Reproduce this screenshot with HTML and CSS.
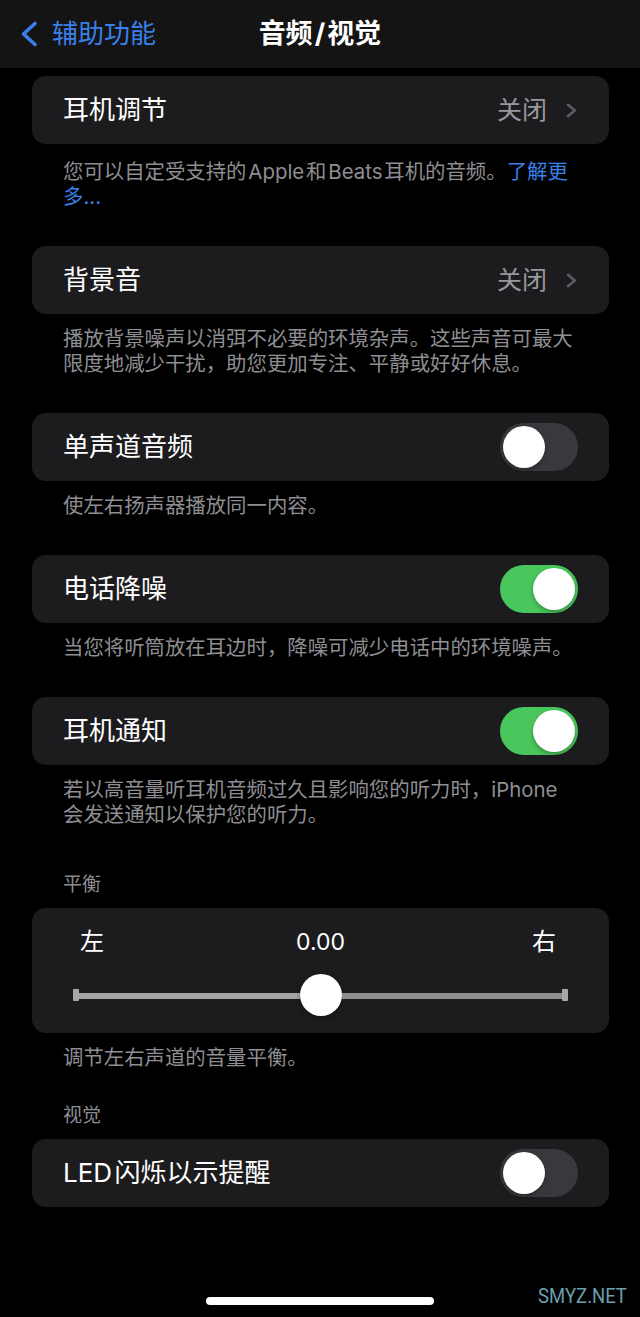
FILE: index.html
```html
<!DOCTYPE html>
<html>

<head>
    <title>音频/视觉</title>
    <link rel="stylesheet" href="styles.css">
</head>

<body>
    <div class="screen">
        <div class="navbar">
            <a class="back" href="#">
                <svg class="back-icon" viewBox="0 0 18 26" width="18" height="26">
                    <path d="M15 2.5 L3.5 13 L15 23.5" />
                </svg>
                <span>辅助功能</span>
            </a>
            <div class="title">音频&#8202;/&#8202;视觉</div>
            <div></div>
        </div>

        <div class="content">
            <div class="group">
                <div class="cell">
                    <span class="cell-label">耳机调节</span>
                    <span class="cell-value">关闭</span>
                    <svg class="chevron" viewBox="0 0 11 15" width="11" height="15">
                        <path d="M2 1.8 L8.8 7.5 L2 13.2" />
                    </svg>
                </div>
                <p class="note note-first">您可以自定受支持的&#8202;Apple&#8202;和&#8202;Beats&#8202;耳机的音频。<a class="link" href="#">了解更多...</a></p>
            </div>

            <div class="group">
                <div class="cell">
                    <span class="cell-label">背景音</span>
                    <span class="cell-value">关闭</span>
                    <svg class="chevron" viewBox="0 0 11 15" width="11" height="15">
                        <path d="M2 1.8 L8.8 7.5 L2 13.2" />
                    </svg>
                </div>
                <p class="note">播放背景噪声以消弭不必要的环境杂声。这些声音可最大限度地减少干扰，助您更加专注、平静或好好休息。</p>
            </div>

            <div class="group">
                <div class="cell">
                    <span class="cell-label">单声道音频</span>
                    <div class="toggle"><div class="knob"></div></div>
                </div>
                <p class="note">使左右扬声器播放同一内容。</p>
            </div>

            <div class="group">
                <div class="cell">
                    <span class="cell-label">电话降噪</span>
                    <div class="toggle on"><div class="knob"></div></div>
                </div>
                <p class="note">当您将听筒放在耳边时，降噪可减少电话中的环境噪声。</p>
            </div>

            <div class="group">
                <div class="cell">
                    <span class="cell-label">耳机通知</span>
                    <div class="toggle on"><div class="knob"></div></div>
                </div>
                <p class="note">若以高音量听耳机音频过久且影响您的听力时，iPhone会发送通知以保护您的听力。</p>
            </div>

            <div class="section-title balance-title">平衡</div>
            <div class="group group-flush">
                <div class="balance">
                    <div class="balance-labels">
                        <span class="side-left">左</span>
                        <span class="balance-value">0.00</span>
                        <span class="side-right">右</span>
                    </div>
                    <div class="slider">
                        <div class="slider-cap"></div>
                        <div class="slider-track track-min"></div>
                        <div class="slider-knob"></div>
                        <div class="slider-track track-max"></div>
                        <div class="slider-cap"></div>
                    </div>
                </div>
                <p class="note">调节左右声道的音量平衡。</p>
            </div>

            <div class="section-title">视觉</div>
            <div class="group group-flush">
                <div class="cell">
                    <span class="cell-label">LED&#8202;闪烁以示提醒</span>
                    <div class="toggle"><div class="knob"></div></div>
                </div>
            </div>
        </div>

        <div class="home-indicator"></div>
        <div class="watermark">SMYZ.NET</div>
    </div>
</body>
</html>
```

FILE: styles.css
```css
body {
    margin: 0;
    background-color: #000000;
    color: #ffffff;
    font-family: Inter, "Noto Sans CJK SC", sans-serif;
}

.screen {
    position: relative;
    min-height: 1317px;
    overflow: hidden;
}

/* top bar */
.navbar {
    height: 68px;
    background-color: #141414;
    display: grid;
    grid-template-columns: 1fr auto 1fr;
    align-items: center;
}

.back {
    display: flex;
    align-items: center;
    gap: 14px;
    padding-left: 20px;
    color: #3a80ea;
    font-size: 26px;
    line-height: 30px;
    text-decoration: none;
}

.back-icon path {
    fill: none;
    stroke: #3a80ea;
    stroke-width: 3.6;
    stroke-linecap: round;
    stroke-linejoin: round;
}

.title {
    font-size: 27px;
    font-weight: bold;
    line-height: 30px;
    color: #ffffff;
}

/* list */
.content {
    padding: 8px 31px 0 32px;
}

.group {
    margin-bottom: 37px;
}

.group-flush {
    margin-bottom: 0;
}

.cell {
    height: 68px;
    display: flex;
    align-items: center;
    padding: 0 31px;
    background-color: #1c1c1e;
    border-radius: 14px;
}

.cell-label {
    font-size: 26px;
    line-height: 32px;
    color: #ffffff;
}

.cell-value {
    margin-left: auto;
    font-size: 25px;
    line-height: 32px;
    color: #98989d;
}

.chevron {
    margin-left: 19px;
    margin-right: 1px;
}

.chevron path {
    fill: none;
    stroke: #5c5c61;
    stroke-width: 2.6;
    stroke-linecap: round;
    stroke-linejoin: round;
}

.note {
    margin: 0;
    padding: 12px 0 0 31px;
    width: 512px;
    font-size: 20.4px;
    line-height: 25px;
    color: #8e8e93;
}

.note-first {
    padding-top: 15px;
}

.link {
    color: #3a80ea;
    text-decoration: none;
}

/* switches */
.toggle {
    margin-left: auto;
    width: 78px;
    height: 48px;
    box-sizing: border-box;
    padding: 3px;
    border-radius: 24px;
    background-color: #39393d;
    display: flex;
}

.toggle.on {
    background-color: #4ac75c;
    justify-content: flex-end;
}

.knob {
    width: 42px;
    height: 42px;
    border-radius: 50%;
    background-color: #ffffff;
    box-shadow: 0 2px 4px rgba(0, 0, 0, 0.3);
}

/* section headers */
.section-title {
    margin: 34px 0 11px;
    padding-left: 31px;
    font-size: 19px;
    line-height: 24px;
    color: #8e8e93;
}

.balance-title {
    margin-top: 46px;
}

/* balance slider */
.balance {
    height: 125px;
    box-sizing: border-box;
    padding-top: 19px;
    background-color: #1c1c1e;
    border-radius: 14px;
}

.balance-labels {
    display: grid;
    grid-template-columns: 1fr auto 1fr;
    align-items: center;
    padding: 0 50px;
    font-size: 24px;
    line-height: 30px;
    color: #ffffff;
}

.side-left {
    margin-left: -2px;
}

.side-right {
    justify-self: end;
    margin-right: 3px;
}

.balance-value {
    font-size: 23px;
}

.slider {
    display: flex;
    align-items: center;
    height: 42px;
    margin: 17px 41px 0;
}

.slider-cap {
    width: 6px;
    height: 12px;
    background-color: #a8a8a8;
    border-radius: 1px;
}

.slider-track {
    flex: 1;
    height: 6px;
    margin-top: 2px;
}

.track-min {
    background-color: #a4a4a4;
}

.track-max {
    background-color: #8e8e8e;
}

.slider-knob {
    width: 42px;
    height: 42px;
    border-radius: 50%;
    background-color: #ffffff;
    box-shadow: 0 2px 5px rgba(0, 0, 0, 0.35);
}

/* overlays */
.home-indicator {
    position: absolute;
    left: 206px;
    bottom: 12px;
    width: 228px;
    height: 8px;
    border-radius: 4px;
    background-color: #ffffff;
}

.watermark {
    position: absolute;
    right: 13px;
    bottom: 10px;
    font-family: Roboto, sans-serif;
    font-size: 21px;
    line-height: 22px;
    color: #6a9fac;
    transform: scaleX(0.88);
    transform-origin: right center;
}
```
